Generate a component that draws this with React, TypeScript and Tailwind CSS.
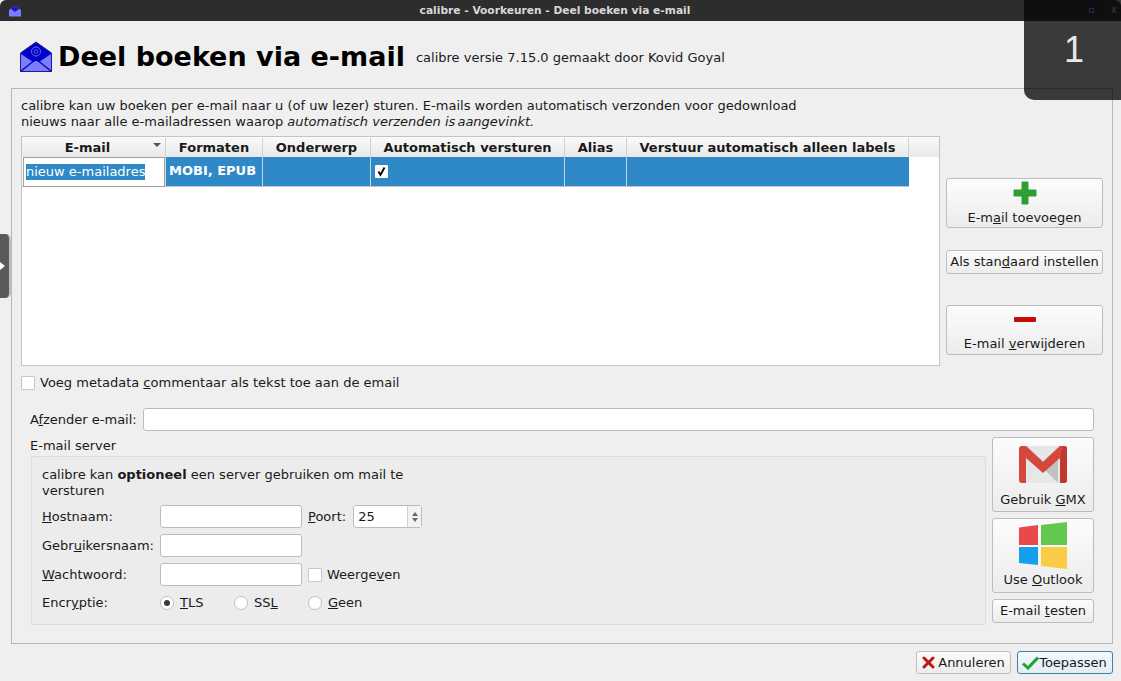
import { ReactNode } from 'react';

const columns = [
  { label: 'E-mail', width: 'w-[144px]' },
  { label: 'Formaten', width: 'w-[97px]' },
  { label: 'Onderwerp', width: 'w-[108px]' },
  { label: 'Automatisch versturen', width: 'w-[194px]' },
  { label: 'Alias', width: 'w-[62px]' },
  { label: 'Verstuur automatisch alleen labels', width: 'w-[282px]' },
];

const MailIcon = () => (
  <svg width="32" height="32" viewBox="0 0 32 32">
    <path d="M0.5 12 L16 1 L31.5 12 L31.5 30.5 L0.5 30.5 Z" fill="#0000c8" stroke="#1a1a9a" />
    <path d="M1 13 L13 21 L16 19.5 L19 21 L31 13 L31 30 L1 30 Z" fill="#7c7cfc" />
    <path d="M1 30 L13 20.5 L16 19 L19 20.5 L31 30" fill="none" stroke="#0000b0" strokeWidth="1.3" />
    <circle cx="16" cy="10.5" r="4.5" fill="none" stroke="#6c6cf0" strokeWidth="1" />
    <circle cx="16" cy="10.5" r="1.8" fill="none" stroke="#6c6cf0" strokeWidth="0.9" />
  </svg>
);

const GmailIcon = () => (
  <svg width="48" height="37" viewBox="0 0 48 37">
    <rect x="2" y="0" width="44" height="37" fill="#e6e6e6" />
    <path d="M8 0 L24 15 L40 0 L40 10 L24 25 L8 10 Z" fill="#cdcdcd" />
    <path d="M9 37 L24 22 L39 37 Z" fill="#e8e8e8" />
    <path d="M24 22 L39 37 L39 14 Z" fill="#c2c2c2" />
    <path d="M0 3 Q0 0 3 0 L7 0 L24 16 L41 0 L45 0 Q48 0 48 3 L48 34 Q48 37 45 37 L41 37 L41 12 L24 27 L7 12 L7 37 L3 37 Q0 37 0 34 Z" fill="#d5473b" />
    <path d="M41 12 L44 0 L45 0 Q48 0 48 3 L48 34 Q48 37 45 37 L41 37 Z" fill="#c0392f" />
  </svg>
);

const WindowsIcon = () => (
  <svg width="48" height="47" viewBox="0 0 48 47">
    <path d="M0 5.5 L19 3 L19 23 L0 23 Z" fill="#e84a4a" />
    <path d="M22 3 L48 0 L48 23 L22 23 Z" fill="#62c84e" />
    <path d="M0 25 L19 25 L19 43 L0 41 Z" fill="#14a0ee" />
    <path d="M22 25 L48 25 L48 47 L22 44 Z" fill="#f8cc44" />
  </svg>
);

const Btn = ({ className, children }: { className: string; children: ReactNode }) => (
  <div className={`flex flex-col items-center rounded-[3px] border border-[#bdbdbd] bg-gradient-to-b from-[#fcfcfc] to-[#ececec] ${className}`}>
    {children}
  </div>
);

const Input = ({ className, children }: { className: string; children?: ReactNode }) => (
  <div className={`h-[23px] rounded-[3px] border border-[#bcbcbc] bg-white ${className}`}>{children}</div>
);

const Checkbox = () => <div className="h-[14px] w-[14px] shrink-0 rounded-[1px] border border-[#c8c8c8] bg-white" />;

const Radio = ({ checked }: { checked?: boolean }) => (
  <div className="flex h-[14px] w-[14px] shrink-0 items-center justify-center rounded-full border border-[#c0c0c0] bg-white">
    {checked && <div className="h-[6px] w-[6px] rounded-full bg-[#3a3a3a]" />}
  </div>
);

const ServerRow = ({ label, children, className }: { label: ReactNode; children: ReactNode; className: string }) => (
  <div className={`flex items-center ${className}`}>
    <div className="w-[118px] shrink-0">{label}</div>
    {children}
  </div>
);

export default function App() {
  return (
    <div className="relative flex h-[681px] w-[1121px] flex-col overflow-hidden bg-[#efefef] font-['DejaVu_Sans',sans-serif] text-[13px] leading-[16px] text-[#1a1a1a]">
      {/* title bar */}
      <div className="relative flex h-[21px] shrink-0 items-center justify-center rounded-t-[6px] bg-[#2d2d2d] pr-[11px] text-[10.67px] font-bold text-[#d8d8d8]">
        <svg className="absolute left-[8px] top-[5px]" width="14" height="12" viewBox="0 0 14 12">
          <path d="M1 5 L7 1 L13 5 L13 11.5 L1 11.5 Z" fill="#7c7cfc" />
          <path d="M3 4 L7 1 L11 4 L7 7 Z" fill="#1818c8" />
        </svg>
        calibre - Voorkeuren - Deel boeken via e-mail
      </div>

      {/* header */}
      <div className="flex h-[67px] shrink-0 items-center pl-[20px] pt-[5px]">
        <MailIcon />
        <div className="ml-[6px] text-[27px] font-bold leading-[34px] text-black">Deel boeken via e-mail</div>
        <div className="ml-[11px] mt-[1px]">calibre versie 7.15.0 gemaakt door Kovid Goyal</div>
      </div>

      {/* main panel */}
      <div className="ml-[11px] flex h-[556px] w-[1102px] shrink-0 flex-col border border-[#b8b8b8] pl-[9px] pt-[9px]">
        <p>
          calibre kan uw boeken per e-mail naar u (of uw lezer) sturen. E-mails worden automatisch verzonden voor gedownload
          <br />
          nieuws naar alle e-mailadressen waarop <i>automatisch verzenden is<span className="ml-[-2px]"> aangevinkt.</span></i>
        </p>

        <div className="mt-[6px] flex">
          <div className="h-[230px] w-[919px] shrink-0 border border-[#c4c4c4] bg-white">
            <div className="flex h-[20px] bg-gradient-to-b from-[#fafafa] to-[#e9e9e9] pt-[1px]">
              {columns.map((c, i) => (
                <div
                  key={c.label}
                  className={`relative flex items-center justify-center border-r border-[#d0d0d0] font-bold last:border-r-0 ${c.width} ${i === 0 ? 'pr-[12px]' : ''}`}
                >
                  {c.label}
                  {i === 0 && <div className="absolute right-[4px] top-[5px] h-0 w-0 border-x-[4px] border-t-[4px] border-x-transparent border-t-[#555]" />}
                </div>
              ))}
              <div className="flex-1" />
            </div>
            <div className="flex h-[30px] w-[887px] border-b border-[#c4c4c4] bg-[#2e89c6] text-white">
              <div className="flex w-[144px] items-center border-r border-[#d8d8d8] bg-white pl-[1px]">
                <div className="flex h-[30px] w-[142px] items-center border border-[#a0a0a0] pl-[2px]">
                  <span className="bg-[#2e89c6] leading-[16px]">nieuw e-mailadres</span>
                </div>
              </div>
              <div className="flex w-[97px] items-center border-r border-[#bcd6e8] pb-[2px] pl-[3px] font-bold">MOBI, EPUB</div>
              <div className="w-[108px] border-r border-[#bcd6e8]" />
              <div className="flex w-[194px] items-center border-r border-[#bcd6e8] pl-[4px]">
                <div className="flex h-[13px] w-[13px] items-center justify-center rounded-[1px] bg-white">
                  <svg width="11" height="11" viewBox="0 0 11 11">
                    <path d="M2.5 5.5 L4.5 9 L8.5 1.5" fill="none" stroke="#000" strokeWidth="1.8" />
                  </svg>
                </div>
              </div>
              <div className="w-[62px] border-r border-[#bcd6e8]" />
              <div className="flex-1" />
            </div>
          </div>

          <div className="ml-[6px] flex w-[157px] shrink-0 flex-col pt-[42px]">
            <Btn className="h-[50px] justify-center">
              <svg width="24" height="24" viewBox="0 0 24 24">
                <path d="M9 1 H15 V9 H23 V15 H15 V23 H9 V15 H1 V9 H9 Z" fill="#2f9e33" stroke="#2f9e33" strokeLinejoin="round" />
              </svg>
              <span className="mt-[5px]">E-m<u>a</u>il toevoegen</span>
            </Btn>
            <Btn className="mt-[22px] h-[24px] justify-center">
              <span>Als stan<u>d</u>aard instellen</span>
            </Btn>
            <Btn className="mt-[31px] h-[50px] justify-center">
              <svg width="24" height="24" viewBox="0 0 24 24" className="mt-[-2px]">
                <rect x="1" y="10" width="22" height="5" rx="1" fill="#c80c0c" />
              </svg>
              <span className="mt-[5px]">E-mail <u>v</u>erwijderen</span>
            </Btn>
          </div>
        </div>

        <div className="mt-[9px] flex items-center gap-[5px]">
          <Checkbox />
          <span>Voeg metadata <u>c</u>ommentaar als tekst toe aan de email</span>
        </div>

        <div className="mt-[17px] flex items-center pl-[9px]">
          <span className="w-[113px]">A<u>f</u>zender e-mail:</span>
          <Input className="w-[951px]" />
        </div>

        <div className="ml-[9px] mt-[7px]">E-mail server</div>

        <div className="flex">
          <div className="ml-[10px] mt-[2px] h-[169px] w-[955px] shrink-0 rounded-[2px] border border-[#dcdcdc] bg-[#ececec] pl-[10px] pt-[10px]">
            <p>
              calibre kan <b>optioneel</b> een server gebruiken om mail te
              <br />
              versturen
            </p>
            <ServerRow label={<><u>H</u>ostnaam:</>} className="mt-[6px]">
              <Input className="w-[142px]" />
              <span className="ml-[6px]"><u>P</u>oort:</span>
              <Input className="ml-[7px] flex w-[69px] items-center justify-between pl-[4px]">
                <span>25</span>
                <div className="flex h-full w-[14px] flex-col items-center justify-center gap-[2px] border-l border-[#d0d0d0] bg-[#f2f2f2]">
                  <div className="h-0 w-0 border-x-[3.5px] border-b-[4px] border-x-transparent border-b-[#666]" />
                  <div className="h-0 w-0 border-x-[3.5px] border-t-[4px] border-x-transparent border-t-[#666]" />
                </div>
              </Input>
            </ServerRow>
            <ServerRow label={<>Gebr<u>u</u>ikersnaam:</>} className="mt-[6px]">
              <Input className="w-[142px]" />
            </ServerRow>
            <ServerRow label={<><u>W</u>achtwoord:</>} className="mt-[6px]">
              <Input className="w-[142px]" />
              <div className="ml-[6px]"><Checkbox /></div>
              <span className="ml-[5px]">Weerge<u>v</u>en</span>
            </ServerRow>
            <ServerRow label={<>Encr<u>y</u>ptie:</>} className="mt-[9px]">
              <Radio checked />
              <span className="ml-[6px] w-[54px]"><u>T</u>LS</span>
              <Radio />
              <span className="ml-[6px] w-[54px]">SS<u>L</u></span>
              <Radio />
              <span className="ml-[6px]"><u>G</u>een</span>
            </ServerRow>
          </div>

          <div className="ml-[6px] mt-[-17px] flex w-[102px] shrink-0 flex-col gap-[6px]">
            <Btn className="h-[75px] pt-[8px]">
              <GmailIcon />
              <span className="mt-[9px]">Gebruik <u>G</u>MX</span>
            </Btn>
            <Btn className="h-[75px] pt-[3px]">
              <WindowsIcon />
              <span className="mt-[3px]">Use <u>O</u>utlook</span>
            </Btn>
            <Btn className="h-[24px] justify-center">
              <span>E-mail <u>t</u>esten</span>
            </Btn>
          </div>
        </div>
      </div>

      {/* dialog buttons */}
      <div className="mr-[8px] mt-[7px] flex justify-end gap-[6px]">
        <div className="flex h-[23px] w-[95px] items-center justify-center gap-[3px] rounded-[3px] border border-[#bdbdbd] bg-gradient-to-b from-[#fcfcfc] to-[#ececec]">
          <svg width="13" height="13" viewBox="0 0 13 13">
            <path d="M2 2 L11 11 M11 2 L2 11" stroke="#c01818" strokeWidth="3" strokeLinecap="round" />
          </svg>
          Annuleren
        </div>
        <div className="flex h-[23px] w-[96px] items-center justify-center rounded-[3px] border border-[#3f7fa8] bg-gradient-to-b from-[#f4f9fd] to-[#e2edf5] pr-[1px]">
          <svg width="17" height="14" viewBox="0 0 17 14">
            <path d="M1 7.5 L6 12 L16 1.5" fill="none" stroke="#22a030" strokeWidth="3" />
          </svg>
          Toepassen
        </div>
      </div>

      {/* side handle */}
      <div className="absolute left-0 top-[234px] flex h-[64px] w-[11px] items-center rounded-r-[5px] border-r-2 border-[#bdbdbd] bg-[#5c5a58]">
        <div className="h-0 w-0 border-y-[4px] border-l-[5px] border-y-transparent border-l-white" />
      </div>

      {/* workspace number overlay */}
      <div className="absolute right-0 top-0 h-[100px] w-[97px] rounded-bl-[10px] bg-[#060606]/78" />
      <div className="absolute right-[37px] top-[30px] font-['Liberation_Sans',sans-serif] text-[36px] font-normal leading-[40px] text-[#e8e8e8]">
        1
      </div>
      <div className="absolute right-[27px] top-[8px] h-[5px] w-[5px] border border-[#2a2a50]" />
      <div className="absolute right-[4px] top-[4px] text-[10px] leading-[12px] text-[#3a3a3a]">x</div>
    </div>
  );
}
